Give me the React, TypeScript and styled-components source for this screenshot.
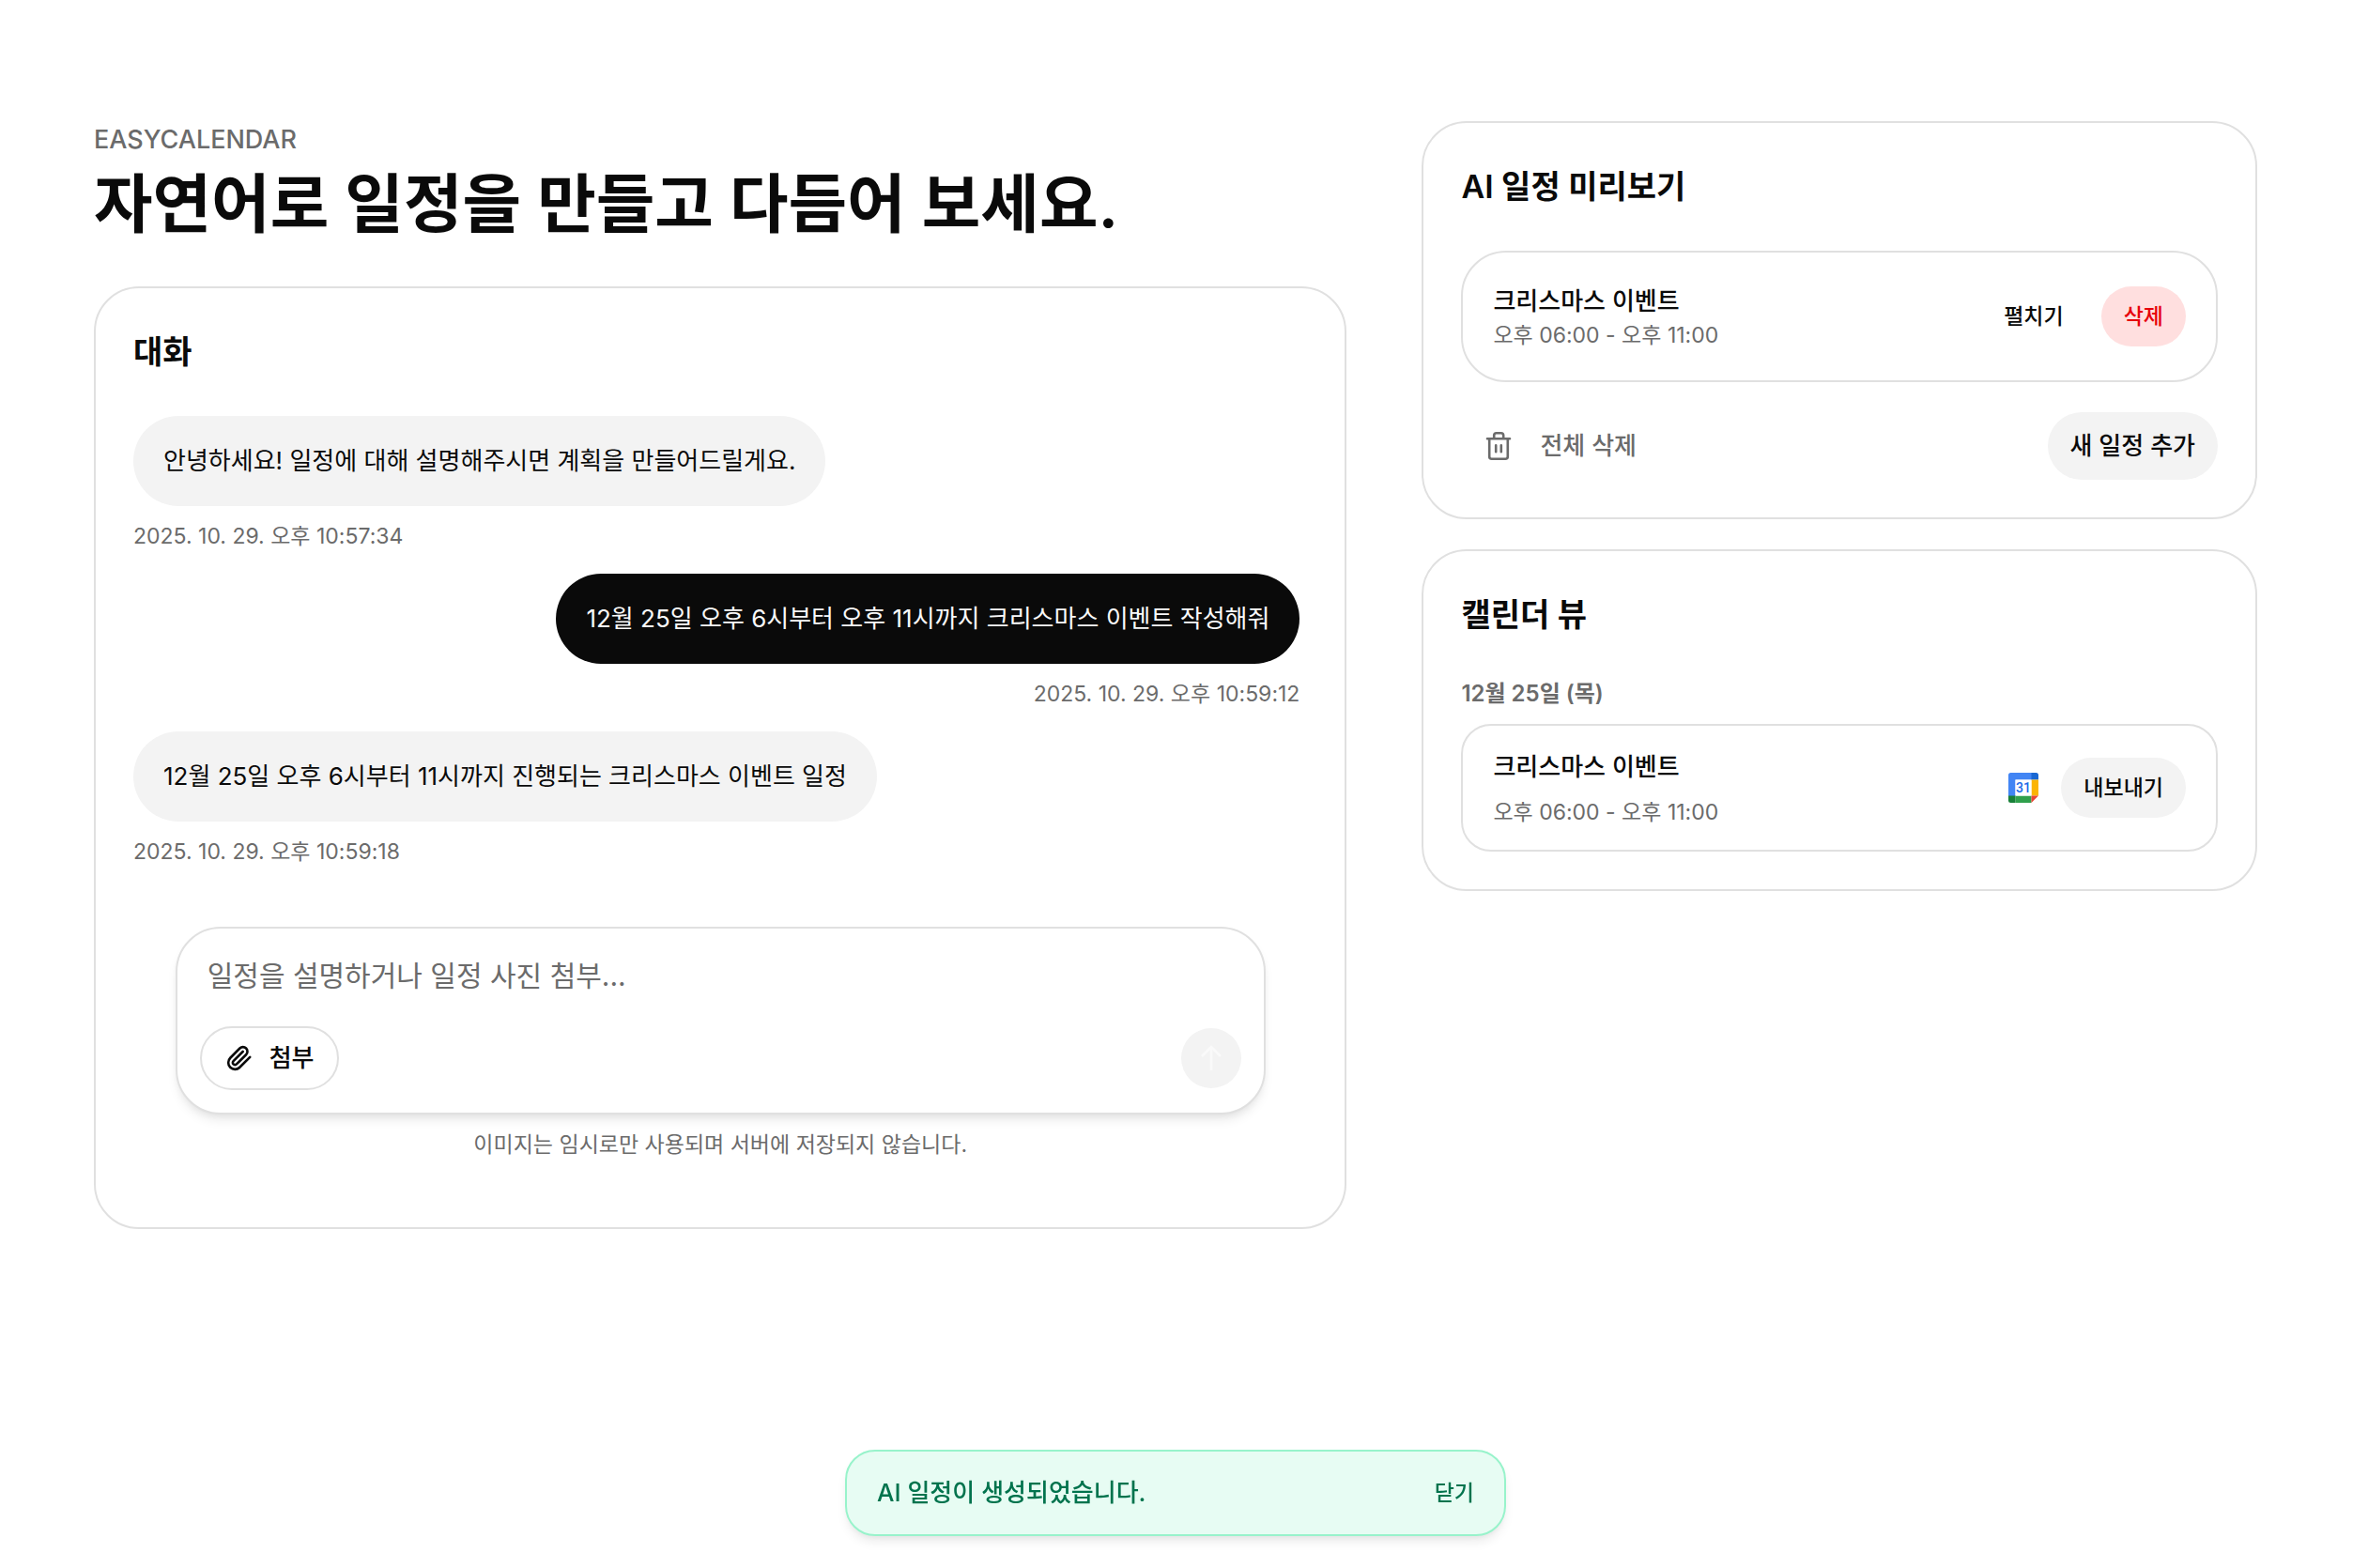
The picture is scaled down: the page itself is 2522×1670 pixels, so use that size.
import React, { useState } from 'react';
import styled, { createGlobalStyle } from 'styled-components';

const color = {
  ink: '#0a0a0a',
  muted: '#6b6b6b',
  line: '#e0e0e0',
  soft: '#f3f3f3',
};

const GlobalStyle = createGlobalStyle`
  *, *::before, *::after { box-sizing: border-box; }
  body {
    margin: 0;
    background: #ffffff;
    color: ${color.ink};
    font-family: Inter, 'Noto Sans CJK KR', sans-serif;
    -webkit-font-smoothing: antialiased;
  }
  h1, h2, h3, p, ul { margin: 0; padding: 0; }
  ul { list-style: none; }
  button, textarea { font-family: inherit; color: inherit; }
`;

const Page = styled.main`
  padding: 129px 118px 64px 100px;
`;

const Columns = styled.div`
  display: grid;
  grid-template-columns: 3fr 2fr;
  gap: 80px;
  align-items: start;

  @media (max-width: 1500px) {
    grid-template-columns: 1fr;
  }
`;

const MainColumn = styled.section`
  display: flex;
  flex-direction: column;
  gap: 48px;
  min-width: 0;
`;

const SideColumn = styled.aside`
  display: flex;
  flex-direction: column;
  gap: 32px;
  min-width: 0;
`;

const Header = styled.header`
  display: flex;
  flex-direction: column;
  gap: 8px;
`;

const Brand = styled.p`
  font-size: 27px;
  line-height: 40px;
  font-weight: 500;
  color: ${color.muted};
`;

const PageTitle = styled.h1`
  font-size: 68px;
  line-height: 80px;
  font-weight: 600;
`;

const Card = styled.section`
  display: flex;
  flex-direction: column;
  padding: 40px;
  border: 2px solid ${color.line};
  border-radius: 48px;
  background: #ffffff;
`;

const CardTitle = styled.h2`
  margin-bottom: 40px;
  font-size: 34px;
  line-height: 56px;
  font-weight: 600;
`;

const Messages = styled.ul`
  display: flex;
  flex-direction: column;
  gap: 24px;
  padding-right: 8px;
`;

const Message = styled.li<{ $mine?: boolean }>`
  display: flex;
  flex-direction: column;
  align-items: ${(p) => (p.$mine ? 'flex-end' : 'flex-start')};
  gap: 16px;
`;

const Bubble = styled.p<{ $mine?: boolean }>`
  padding: 28px 32px;
  border-radius: 48px;
  font-size: 26px;
  line-height: 40px;
  background: ${(p) => (p.$mine ? color.ink : color.soft)};
  color: ${(p) => (p.$mine ? '#fafafa' : color.ink)};
`;

const Small = styled.p`
  font-size: 23px;
  line-height: 32px;
  color: ${color.muted};
`;

const Composer = styled.form`
  display: flex;
  flex-direction: column;
  align-items: center;
  gap: 16px;
  padding: 64px 0 32px;
`;

const ComposerBox = styled.div`
  display: flex;
  flex-direction: column;
  gap: 16px;
  width: 100%;
  max-width: 1161px;
  padding: 24px;
  border: 2px solid ${color.line};
  border-radius: 48px;
  background: #ffffff;
  box-shadow: 0 8px 12px -2px rgba(0, 0, 0, 0.08), 0 4px 8px -4px rgba(0, 0, 0, 0.08);
`;

const Prompt = styled.textarea`
  display: block;
  width: 100%;
  height: 64px;
  padding: 2px 8px;
  border: 0;
  outline: 0;
  resize: none;
  background: transparent;
  font-size: 30px;
  line-height: 48px;

  &::placeholder {
    color: ${color.muted};
    opacity: 1;
  }
`;

const ComposerBar = styled.div`
  display: flex;
  align-items: center;
  justify-content: space-between;
`;

const AttachButton = styled.button`
  display: inline-flex;
  align-items: center;
  gap: 16px;
  height: 68px;
  padding: 0 24px;
  border: 2px solid ${color.line};
  border-radius: 34px;
  background: #ffffff;
  font-size: 26px;
  line-height: 40px;
  font-weight: 500;
`;

const SendButton = styled.button`
  display: flex;
  align-items: center;
  justify-content: center;
  width: 64px;
  height: 64px;
  padding: 0;
  border: 0;
  border-radius: 50%;
  background: ${color.soft};
  color: #fafafa;
`;

type Tone = 'plain' | 'soft' | 'danger';
const toneBackground: Record<Tone, string> = {
  plain: 'transparent',
  soft: color.soft,
  danger: '#ffdfdf',
};

const PillButton = styled.button<{ $tone?: Tone; $large?: boolean }>`
  display: inline-flex;
  align-items: center;
  justify-content: center;
  height: ${(p) => (p.$large ? 72 : 64)}px;
  padding: 0 24px;
  border: 0;
  border-radius: 36px;
  background: ${(p) => toneBackground[p.$tone ?? 'plain']};
  color: ${(p) => (p.$tone === 'danger' ? '#e7000b' : color.ink)};
  font-size: ${(p) => (p.$large ? 26 : 23)}px;
  line-height: 40px;
  font-weight: 500;
  white-space: nowrap;
`;

const ClearButton = styled.button`
  display: inline-flex;
  align-items: center;
  gap: 28px;
  height: 72px;
  padding: 0 24px;
  border: 0;
  background: transparent;
  color: ${color.muted};
  font-size: 26px;
  line-height: 40px;
  font-weight: 500;
`;

const EventCard = styled.article<{ $compact?: boolean }>`
  display: flex;
  align-items: center;
  justify-content: space-between;
  padding: ${(p) => (p.$compact ? 24 : 32)}px 32px;
  border: 2px solid ${color.line};
  border-radius: ${(p) => (p.$compact ? 32 : 48)}px;
`;

const EventText = styled.div<{ $compact?: boolean }>`
  display: flex;
  flex-direction: column;
  gap: ${(p) => (p.$compact ? 12 : 0)}px;
`;

const EventName = styled.h3`
  font-size: 26px;
  line-height: 40px;
  font-weight: 500;
`;

const Actions = styled.div<{ $gap: number }>`
  display: flex;
  align-items: center;
  gap: ${(p) => p.$gap}px;
`;

const CardFooter = styled.footer`
  display: flex;
  align-items: center;
  justify-content: space-between;
  margin-top: 32px;
`;

const DayLabel = styled.h3`
  margin-bottom: 16px;
  font-size: 24px;
  line-height: 32px;
  font-weight: 600;
  color: ${color.muted};
`;

const ToastLayer = styled.div`
  position: fixed;
  left: 0;
  right: 18px;
  bottom: 34px;
  display: flex;
  justify-content: center;
  pointer-events: none;
`;

const Toast = styled.div`
  display: flex;
  align-items: center;
  justify-content: space-between;
  width: 704px;
  max-width: calc(100% - 64px);
  padding: 24px 32px;
  border: 2px solid #98f3cb;
  border-radius: 32px;
  background: #e7fcf3;
  color: #00734d;
  font-size: 26px;
  line-height: 40px;
  font-weight: 500;
  box-shadow: 0 8px 12px -2px rgba(0, 0, 0, 0.08), 0 4px 8px -4px rgba(0, 0, 0, 0.08);
  pointer-events: auto;
`;

const ToastClose = styled.button`
  padding: 0;
  border: 0;
  background: transparent;
  font-size: 23px;
  line-height: 40px;
  font-weight: 500;
`;

const PaperclipIcon = () => (
  <svg width="32" height="32" viewBox="-1.5 -1.5 27 27" fill="none" stroke="currentColor" strokeWidth="2.2" strokeLinecap="round" strokeLinejoin="round" aria-hidden="true">
    <path d="m21.440 11.050-9.190 9.190a6 6 0 0 1-8.490-8.490l8.570-8.570A4 4 0 1 1 18 8.840l-8.590 8.570a2 2 0 0 1-2.830-2.830l8.490-8.480" />
  </svg>
);

const ArrowUpIcon = () => (
  <svg width="32" height="32" viewBox="0 0 32 32" fill="none" stroke="currentColor" strokeWidth="2.6" aria-hidden="true">
    <path d="M16 29V4M6 14 16 4l10 10" />
  </svg>
);

const TrashIcon = () => (
  <svg width="32" height="32" viewBox="0 0 32 32" fill="none" stroke="currentColor" strokeWidth="2.6" strokeLinecap="round" strokeLinejoin="round" aria-hidden="true">
    <path d="M4 8.200h24M11.200 8V4.700a2.500 2.500 0 0 1 2.500-2.500h5a2.500 2.500 0 0 1 2.500 2.500V8M6.200 8.200v19a2.500 2.500 0 0 0 2.500 2.500h14.600a2.500 2.500 0 0 0 2.500-2.500v-19M13.200 15.200v7M18.800 15.200v7" />
  </svg>
);

const CalendarLogo = () => (
  <svg width="32" height="32" viewBox="0 0 32 32" role="img" aria-label="Google Calendar">
    <path d="M7.500 7.500H25V0H2.500A2.500 2.500 0 0 0 0 2.500V25h7.500z" fill="#4285f4" />
    <path d="M24.500 0h5A2.500 2.500 0 0 1 32 2.500v5h-7.500z" fill="#1967d2" />
    <path d="M24.500 7.500H32v17h-7.500z" fill="#fbb404" />
    <path d="M7.500 24.500h17V32h-17z" fill="#30a04c" />
    <path d="M0 24.500h7.500V32h-5A2.500 2.500 0 0 1 0 29.500z" fill="#188038" />
    <path d="M24.500 24.500H32L24.500 32z" fill="#ea4335" />
    <path d="M7.500 7.500h17v17h-17z" fill="#ffffff" />
    <text x="16" y="21" textAnchor="middle" fontFamily="Roboto, sans-serif" fontSize="14" fontWeight="500" fill="#1a6ae8">31</text>
  </svg>
);

const messages = [
  { text: '안녕하세요! 일정에 대해 설명해주시면 계획을 만들어드릴게요.', time: '2025. 10. 29. 오후 10:57:34', mine: false },
  { text: '12월 25일 오후 6시부터 오후 11시까지 크리스마스 이벤트 작성해줘', time: '2025. 10. 29. 오후 10:59:12', mine: true },
  { text: '12월 25일 오후 6시부터 11시까지 진행되는 크리스마스 이벤트 일정', time: '2025. 10. 29. 오후 10:59:18', mine: false },
];

const event = { name: '크리스마스 이벤트', time: '오후 06:00 - 오후 11:00' };

export default function App() {
  const [draft, setDraft] = useState('');
  const [toastOpen, setToastOpen] = useState(true);

  return (
    <>
      <GlobalStyle />
      <Page>
        <Columns>
          <MainColumn>
            <Header>
              <Brand>EASYCALENDAR</Brand>
              <PageTitle>자연어로 일정을 만들고 다듬어 보세요.</PageTitle>
            </Header>
            <Card>
              <CardTitle>대화</CardTitle>
              <Messages>
                {messages.map((m) => (
                  <Message key={m.time} $mine={m.mine}>
                    <Bubble $mine={m.mine}>{m.text}</Bubble>
                    <Small>{m.time}</Small>
                  </Message>
                ))}
              </Messages>
              <Composer onSubmit={(e) => e.preventDefault()}>
                <ComposerBox>
                  <Prompt
                    rows={1}
                    aria-label="일정 설명"
                    placeholder="일정을 설명하거나 일정 사진 첨부..."
                    value={draft}
                    onChange={(e) => setDraft(e.target.value)}
                  />
                  <ComposerBar>
                    <AttachButton type="button">
                      <PaperclipIcon />
                      첨부
                    </AttachButton>
                    <SendButton type="submit" aria-label="보내기" disabled={!draft}>
                      <ArrowUpIcon />
                    </SendButton>
                  </ComposerBar>
                </ComposerBox>
                <Small>이미지는 임시로만 사용되며 서버에 저장되지 않습니다.</Small>
              </Composer>
            </Card>
          </MainColumn>

          <SideColumn>
            <Card>
              <CardTitle>AI 일정 미리보기</CardTitle>
              <EventCard>
                <EventText>
                  <EventName>{event.name}</EventName>
                  <Small>{event.time}</Small>
                </EventText>
                <Actions $gap={16}>
                  <PillButton type="button">펼치기</PillButton>
                  <PillButton type="button" $tone="danger">삭제</PillButton>
                </Actions>
              </EventCard>
              <CardFooter>
                <ClearButton type="button">
                  <TrashIcon />
                  전체 삭제
                </ClearButton>
                <PillButton type="button" $tone="soft" $large>새 일정 추가</PillButton>
              </CardFooter>
            </Card>

            <Card>
              <CardTitle>캘린더 뷰</CardTitle>
              <DayLabel>12월 25일 (목)</DayLabel>
              <EventCard $compact>
                <EventText $compact>
                  <EventName>{event.name}</EventName>
                  <Small>{event.time}</Small>
                </EventText>
                <Actions $gap={24}>
                  <CalendarLogo />
                  <PillButton type="button" $tone="soft">내보내기</PillButton>
                </Actions>
              </EventCard>
            </Card>
          </SideColumn>
        </Columns>
      </Page>

      {toastOpen && (
        <ToastLayer>
          <Toast role="status">
            AI 일정이 생성되었습니다.
            <ToastClose type="button" onClick={() => setToastOpen(false)}>닫기</ToastClose>
          </Toast>
        </ToastLayer>
      )}
    </>
  );
}
